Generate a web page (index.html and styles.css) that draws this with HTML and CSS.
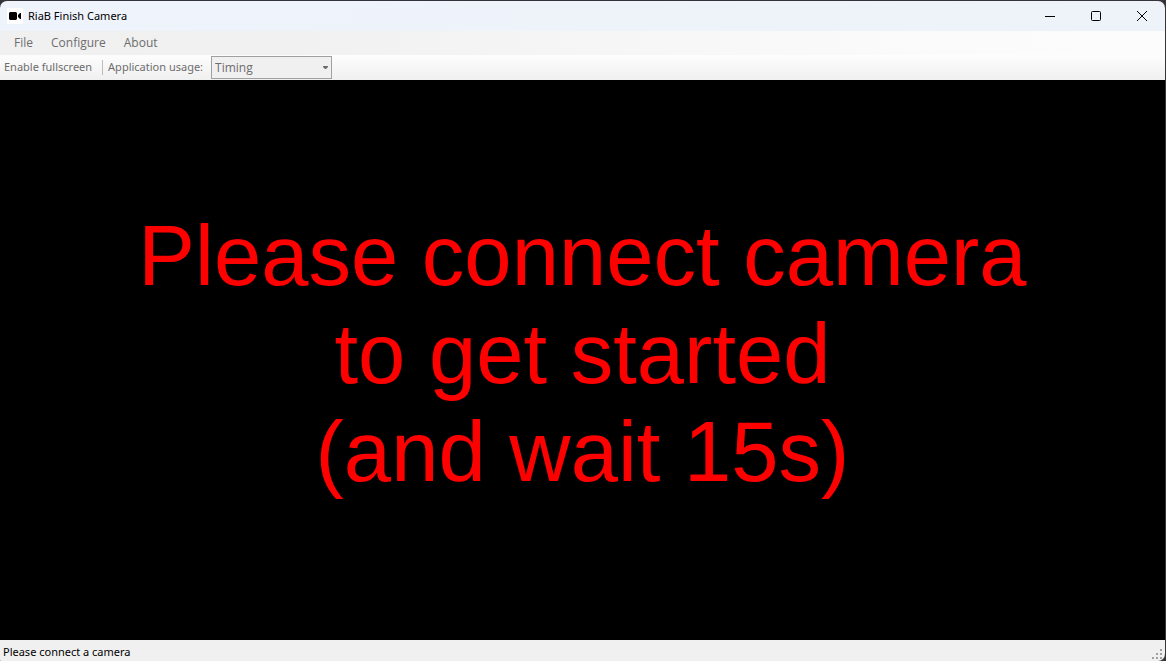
FILE: index.html
```html
<!DOCTYPE html>
<html lang="en">
<head>
<meta charset="utf-8">
<title>RiaB Finish Camera</title>
<link rel="stylesheet" href="styles.css">
</head>
<body>
<div class="window">
  <header class="titlebar">
    <svg class="app-icon" viewBox="0 0 16 16" aria-hidden="true"><path fill="#fff" d="M0 0h16v16H0z"/><path d="M3 4h6l1 1v6l-1 1H3l-1-1V5zM11 7l2-2h1v6h-1l-2-2z"/></svg>
    <h1 class="title">RiaB Finish Camera</h1>
    <div class="controls">
      <button class="control" aria-label="Minimize"><svg viewBox="0 0 12 12"><path d="M1 6.5h10"/></svg></button>
      <button class="control" aria-label="Maximize"><svg viewBox="0 0 12 12"><rect x="1.5" y="1.5" width="9" height="9" rx="1"/></svg></button>
      <button class="control" aria-label="Close"><svg viewBox="0 0 12 12"><path d="M1 1l10 10M11 1L1 11"/></svg></button>
    </div>
  </header>
  <nav class="menubar">
    <button class="menu-item">File</button>
    <button class="menu-item">Configure</button>
    <button class="menu-item">About</button>
  </nav>
  <div class="toolbar">
    <button class="tool">Enable fullscreen</button>
    <span class="separator"></span>
    <label class="usage-label" for="usage">Application usage:</label>
    <div class="combo">
      <select class="usage" id="usage"><option>Timing</option></select>
      <svg class="arrow" viewBox="0 0 5 3" aria-hidden="true"><path d="M0 0h5v1L3 3H2L0 1z"/></svg>
    </div>
  </div>
  <main class="view">
    <p class="message">Please connect camera<br>to get started<br>(and wait 15s)</p>
  </main>
  <footer class="statusbar">
    <span>Please connect a camera</span>
    <svg class="grip" viewBox="0 0 10 10" aria-hidden="true"><path d="M8 0h2v2H8zM4 4h2v2H4zM8 4h2v2H8zM0 8h2v2H0zM4 8h2v2H4zM8 8h2v2H8z"/></svg>
  </footer>
</div>
</body>
</html>
```
FILE: styles.css
```css
* {
  box-sizing: border-box;
}

body {
  margin: 0;
  background: #35343a;
  color: #000;
  font: 11px/16px "Noto Sans", "Open Sans", sans-serif;
}

button,
select {
  margin: 0;
  padding: 0;
  border: 0;
  background: none;
  color: inherit;
  font: inherit;
}

.window {
  display: flex;
  flex-direction: column;
  min-height: 100vh;
  padding: 1px 1px 0 0;
}

.titlebar {
  display: flex;
  align-items: center;
  height: 30px;
  padding-left: 7px;
  border-radius: 7px 7px 0 0;
  background: linear-gradient(90deg, #eff4fc, #eef3f9);
}

.app-icon {
  width: 16px;
  height: 16px;
}

.title {
  flex: 1;
  margin: 0 0 0 5px;
  font-size: 11px;
  font-weight: 400;
}

.controls {
  display: flex;
}

.control {
  display: flex;
  align-items: center;
  justify-content: center;
  width: 46px;
  height: 30px;
}

.control svg {
  width: 12px;
  height: 12px;
  fill: none;
  stroke: #000;
}

.menubar {
  display: flex;
  align-items: center;
  gap: 18px;
  height: 24px;
  padding-left: 14px;
  background: linear-gradient(90deg, #f0f0f0, #f1f1f1 25%, #fbfbfb 80%, #fcfcfc);
  color: #6d6d6d;
  font-family: "Open Sans", "Noto Sans", sans-serif;
  font-size: 12px;
}

.toolbar {
  display: flex;
  align-items: center;
  height: 25px;
  padding-left: 4px;
  background: linear-gradient(#fdfdfd, #f0f0f0);
  color: #6d6d6d;
}

.tool,
.usage-label {
  padding-bottom: 2px;
}

.separator {
  width: 1px;
  height: 15px;
  margin: 0 5px 0 10px;
  background: #bdbdbd;
}

.combo {
  position: relative;
  width: 121px;
  height: 23px;
  margin-left: 8px;
}

.usage {
  width: 100%;
  height: 100%;
  padding-left: 3px;
  border: 1px solid #a0a0a0;
  border-radius: 0;
  background: #f0f0f0;
  font-family: "Open Sans", "Noto Sans", sans-serif;
  font-size: 12px;
  appearance: none;
}

.arrow {
  position: absolute;
  top: 10px;
  right: 4px;
  width: 5px;
  height: 3px;
  fill: #6d6d6d;
  pointer-events: none;
}

.view {
  display: flex;
  flex: 1;
  align-items: center;
  justify-content: center;
  padding-bottom: 12px;
  background: #000;
}

.message {
  margin: 0;
  color: #f00;
  font: 85px/98px "Liberation Sans", Arial, sans-serif;
  text-align: center;
}

.statusbar {
  display: flex;
  align-items: center;
  justify-content: space-between;
  height: 21px;
  padding: 2px 3px 0;
  border-radius: 0 0 7px 1px;
  background: #f0f0f0;
}

.grip {
  align-self: flex-end;
  width: 10px;
  height: 10px;
  margin-bottom: 2px;
  fill: #a0a0a0;
}
```
